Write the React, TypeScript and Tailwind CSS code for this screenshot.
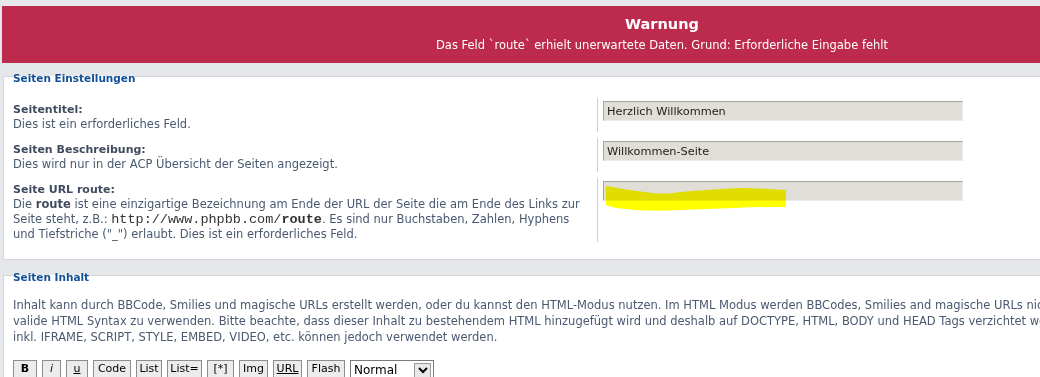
import React from 'react';

const labelCls = "font-bold text-[11px] text-[#3f4b5f]";

function Row({ label, children, value, last }: { label: string; children: React.ReactNode; value: string; last?: boolean }) {
    return (
        <div className={`flex ${last ? '' : 'mb-[6px]'}`}>
            <div className="w-[584px] shrink-0 pt-[4px] leading-[15px] text-[11.5px] text-[#4a5970]">
                <div className={labelCls}>{label}</div>
                <div>{children}</div>
            </div>
            <div className="relative border-l border-[#cfcfcf] pl-[5px] pt-[3px]">
                <input
                    readOnly
                    value={value}
                    className="w-[360px] h-[20px] bg-[#e1ddd7] border border-t-[#a3a3a3] border-l-[#a3a3a3] border-r-[#ebebeb] border-b-[#ebebeb] pl-[3px] text-[11.3px] text-[#222] outline-none"
                />
            </div>
        </div>
    );
}

function Btn({ children, w }: { children: React.ReactNode; w: string }) {
    return (
        <div className={`${w} h-[18px] border border-[#8d8d8d] bg-[#ececec] text-center leading-[16px] text-[11px] text-black`}>
            {children}
        </div>
    );
}

export default function App() {
    return (
        <div className="w-full h-[377px] overflow-hidden bg-[#e5e7ea] font-['DejaVu_Sans',Verdana,sans-serif] text-[11px]">
            <div className="w-[1322px] pt-[6px] pl-[2px]">
                {/* Warning banner */}
                <div className="bg-[#bc2a4d] text-white text-center pt-[8px] pb-[10px]">
                    <div className="font-bold text-[14.5px] leading-[20px]">Warnung</div>
                    <div className="mt-[4px] leading-[15px] text-[11.5px]">
                        Das Feld `route` erhielt unerwartete Daten. Grund: Erforderliche Eingabe fehlt
                    </div>
                </div>

                <div className="ml-[1px]">
                    {/* Settings */}
                    <fieldset className="mt-[5px] border border-[#d5d5d5] bg-white px-[9px] pb-[17px]">
                        <legend className="pt-[4px] leading-[12px] text-[10.5px] font-bold text-[#115098]">Seiten Einstellungen</legend>
                        <div className="mt-[14px]">
                            <Row label="Seitentitel:" value="Herzlich Willkommen">
                                Dies ist ein erforderliches Feld.
                            </Row>
                            <Row label="Seiten Beschreibung:" value="Willkommen-Seite">
                                Dies wird nur in der ACP Übersicht der Seiten angezeigt.
                            </Row>
                            <div className="flex">
                                <div className="w-[584px] shrink-0 pt-[4px] leading-[15px] text-[11.5px] text-[#4a5970]">
                                    <div className={labelCls}>Seite URL route:</div>
                                    <div className="whitespace-nowrap">
                                        Die <b className="text-[#3f4b5f]">route</b> ist eine einzigartige Bezeichnung am Ende der URL der Seite die am Ende des Links zur
                                        <br />
                                        Seite steht, z.B.: <span className="font-['Liberation_Mono',monospace] text-[13.5px] text-[#333]">http://www.phpbb.com/<b>route</b></span>. Es sind nur Buchstaben, Zahlen, Hyphens
                                        <br />
                                        und Tiefstriche ("_") erlaubt. Dies ist ein erforderliches Feld.
                                    </div>
                                </div>
                                <div className="relative border-l border-[#cfcfcf] pl-[5px] pt-[3px]">
                                    <input
                                        readOnly
                                        value=""
                                        className="w-[360px] h-[20px] bg-[#e1ddd7] border border-t-[#a3a3a3] border-l-[#a3a3a3] border-r-[#ebebeb] border-b-[#ebebeb] pl-[3px] text-[11px] outline-none"
                                    />
                                    {/* yellow marker scribble */}
                                    <svg className="absolute left-[7px] top-[6px] mix-blend-multiply" width="184" height="30" viewBox="0 0 184 30">
                                        <path
                                            d="M1 2 C10 3 20 6 40 8 C55 10 62 10 75 8 C95 6 115 5 135 4 C150 4 165 5 181 6 L181 23 C165 23 150 23 130 24 C110 25 95 25 75 26 C60 27 45 27 30 26 C15 25 6 23 1 21 Z"
                                            fill="#ffff00"
                                        />
                                    </svg>
                                </div>
                            </div>
                        </div>
                    </fieldset>

                    {/* Content */}
                    <fieldset className="mt-[7px] border border-[#d5d5d5] bg-white px-[9px] pb-[20px]">
                        <legend className="pt-[4px] leading-[12px] text-[10.5px] font-bold text-[#115098]">Seiten Inhalt</legend>
                        <p className="mt-[14px] leading-[16px] text-[11.5px] text-[#4a5970] whitespace-nowrap">
                            Inhalt kann durch BBCode, Smilies und magische URLs erstellt werden, oder du kannst den HTML-Modus nutzen. Im HTML Modus werden BBCodes, Smilies and magische URLs nicht
                            <br />
                            valide HTML Syntax zu verwenden. Bitte beachte, dass dieser Inhalt zu bestehendem HTML hinzugefügt wird und deshalb auf DOCTYPE, HTML, BODY und HEAD Tags verzichtet werden
                            <br />
                            inkl. IFRAME, SCRIPT, STYLE, EMBED, VIDEO, etc. können jedoch verwendet werden.
                        </p>
                        <div className="mt-[15px] flex items-start gap-[5px]">
                            <Btn w="w-[24px]"><b>B</b></Btn>
                            <Btn w="w-[19px]"><i>i</i></Btn>
                            <Btn w="w-[22px]"><u>u</u></Btn>
                            <Btn w="w-[38px]">Code</Btn>
                            <Btn w="w-[26px]">List</Btn>
                            <Btn w="w-[35px]">List=</Btn>
                            <Btn w="w-[27px]">[*]</Btn>
                            <Btn w="w-[29px]">Img</Btn>
                            <Btn w="w-[29px]"><u>URL</u></Btn>
                            <Btn w="w-[38px]">Flash</Btn>
                            <div className="w-[84px] h-[20px] border border-[#7b7b7b] bg-white flex items-center justify-between pl-[3px] pr-[2px] text-[12px] text-black">
                                <span>Normal</span>
                                <span className="w-[17px] h-[15px] bg-[#e8e8e8] border border-[#9a9a9a] flex items-center justify-center">
                                    <svg width="10" height="7" viewBox="0 0 10 7">
                                        <path d="M1 1 L5 5 L9 1" fill="none" stroke="#000" strokeWidth="2" />
                                    </svg>
                                </span>
                            </div>
                        </div>
                    </fieldset>
                </div>
            </div>
        </div>
    );
}
